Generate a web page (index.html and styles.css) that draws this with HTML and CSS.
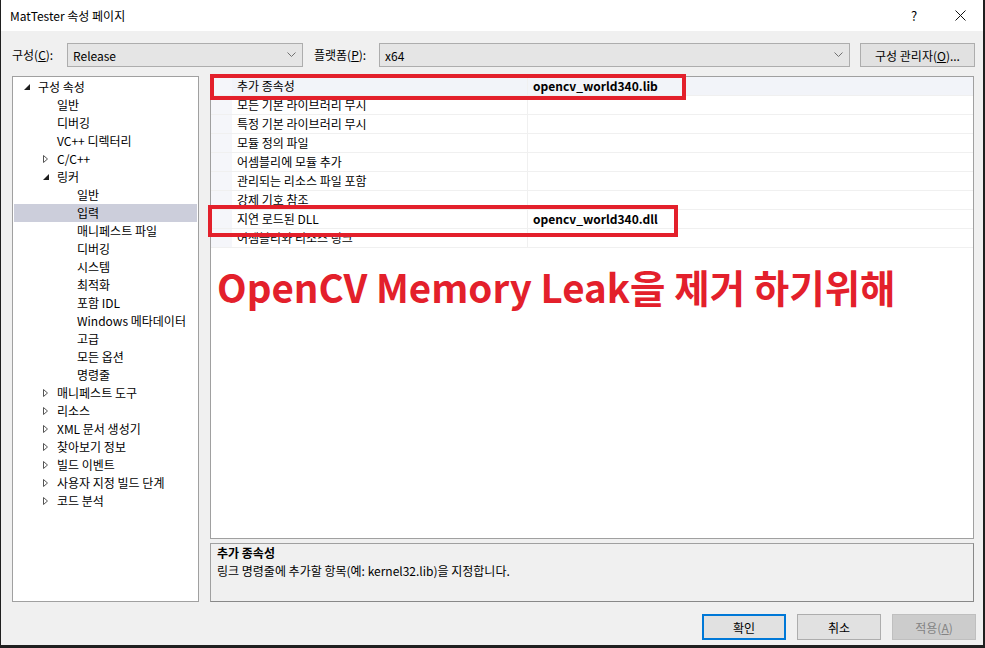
FILE: index.html
```html
<!DOCTYPE html>
<html>
<head>
  <title>MatTester 속성 페이지</title>
  <link rel="stylesheet" href="styles.css">
</head>
<body>
  <div class="window">

    <div class="titlebar">
      <span class="title">MatTester 속성 페이지</span>
      <span class="tb-btn">?</span>
      <span class="tb-btn">
        <svg width="11" height="11" viewBox="0 0 11 11"><path d="M0.5 0.5 L10.5 10.5 M10.5 0.5 L0.5 10.5" stroke="#111" stroke-width="1" fill="none"/></svg>
      </span>
    </div>

    <div class="toolbar">
      <span class="tool-label label-config">구성(<u>C</u>):</span>
      <div class="combo combo-config">
        <span>Release</span>
        <svg class="chev" width="9" height="6" viewBox="0 0 9 6"><path d="M0.5 0.5 L4.5 4.5 L8.5 0.5" stroke="#707070" fill="none"/></svg>
      </div>
      <span class="tool-label label-platform">플랫폼(<u>P</u>):</span>
      <div class="combo combo-platform">
        <span>x64</span>
        <svg class="chev" width="9" height="6" viewBox="0 0 9 6"><path d="M0.5 0.5 L4.5 4.5 L8.5 0.5" stroke="#707070" fill="none"/></svg>
      </div>
      <button class="btn btn-manager" type="button">구성 관리자(<u>O</u>)...</button>
    </div>

    <div class="main">
      <div class="tree">
        <div class="tree-item lvl0"><span class="arrow"><svg width="6" height="6" viewBox="0 0 6 6"><path d="M6 0 L6 6 L0 6 Z" fill="#1e1e1e"/></svg></span>구성 속성</div>
        <div class="tree-item lvl1"><span class="arrow"></span>일반</div>
        <div class="tree-item lvl1"><span class="arrow"></span>디버깅</div>
        <div class="tree-item lvl1"><span class="arrow"></span>VC++ 디렉터리</div>
        <div class="tree-item lvl1"><span class="arrow"><svg width="5" height="8" viewBox="0 0 5 8"><path d="M0.5 0.5 L4.5 4 L0.5 7.5 Z" stroke="#555" fill="none" stroke-width="1"/></svg></span>C/C++</div>
        <div class="tree-item lvl1"><span class="arrow"><svg width="6" height="6" viewBox="0 0 6 6"><path d="M6 0 L6 6 L0 6 Z" fill="#1e1e1e"/></svg></span>링커</div>
        <div class="tree-item lvl2"><span class="arrow"></span>일반</div>
        <div class="tree-item lvl2 selected"><span class="arrow"></span>입력</div>
        <div class="tree-item lvl2"><span class="arrow"></span>매니페스트 파일</div>
        <div class="tree-item lvl2"><span class="arrow"></span>디버깅</div>
        <div class="tree-item lvl2"><span class="arrow"></span>시스템</div>
        <div class="tree-item lvl2"><span class="arrow"></span>최적화</div>
        <div class="tree-item lvl2"><span class="arrow"></span>포함 IDL</div>
        <div class="tree-item lvl2"><span class="arrow"></span>Windows 메타데이터</div>
        <div class="tree-item lvl2"><span class="arrow"></span>고급</div>
        <div class="tree-item lvl2"><span class="arrow"></span>모든 옵션</div>
        <div class="tree-item lvl2"><span class="arrow"></span>명령줄</div>
        <div class="tree-item lvl1"><span class="arrow"><svg width="5" height="8" viewBox="0 0 5 8"><path d="M0.5 0.5 L4.5 4 L0.5 7.5 Z" stroke="#555" fill="none"/></svg></span>매니페스트 도구</div>
        <div class="tree-item lvl1"><span class="arrow"><svg width="5" height="8" viewBox="0 0 5 8"><path d="M0.5 0.5 L4.5 4 L0.5 7.5 Z" stroke="#555" fill="none"/></svg></span>리소스</div>
        <div class="tree-item lvl1"><span class="arrow"><svg width="5" height="8" viewBox="0 0 5 8"><path d="M0.5 0.5 L4.5 4 L0.5 7.5 Z" stroke="#555" fill="none"/></svg></span>XML 문서 생성기</div>
        <div class="tree-item lvl1"><span class="arrow"><svg width="5" height="8" viewBox="0 0 5 8"><path d="M0.5 0.5 L4.5 4 L0.5 7.5 Z" stroke="#555" fill="none"/></svg></span>찾아보기 정보</div>
        <div class="tree-item lvl1"><span class="arrow"><svg width="5" height="8" viewBox="0 0 5 8"><path d="M0.5 0.5 L4.5 4 L0.5 7.5 Z" stroke="#555" fill="none"/></svg></span>빌드 이벤트</div>
        <div class="tree-item lvl1"><span class="arrow"><svg width="5" height="8" viewBox="0 0 5 8"><path d="M0.5 0.5 L4.5 4 L0.5 7.5 Z" stroke="#555" fill="none"/></svg></span>사용자 지정 빌드 단계</div>
        <div class="tree-item lvl1"><span class="arrow"><svg width="5" height="8" viewBox="0 0 5 8"><path d="M0.5 0.5 L4.5 4 L0.5 7.5 Z" stroke="#555" fill="none"/></svg></span>코드 분석</div>
      </div>

      <div class="right-pane">
        <div class="grid">
          <div class="prop-row current"><span class="gutter"></span><span class="prop-name">추가 종속성</span><span class="prop-value">opencv_world340.lib</span></div>
          <div class="prop-row"><span class="gutter"></span><span class="prop-name">모든 기본 라이브러리 무시</span><span class="prop-value"></span></div>
          <div class="prop-row"><span class="gutter"></span><span class="prop-name">특정 기본 라이브러리 무시</span><span class="prop-value"></span></div>
          <div class="prop-row"><span class="gutter"></span><span class="prop-name">모듈 정의 파일</span><span class="prop-value"></span></div>
          <div class="prop-row"><span class="gutter"></span><span class="prop-name">어셈블리에 모듈 추가</span><span class="prop-value"></span></div>
          <div class="prop-row"><span class="gutter"></span><span class="prop-name">관리되는 리소스 파일 포함</span><span class="prop-value"></span></div>
          <div class="prop-row"><span class="gutter"></span><span class="prop-name">강제 기호 참조</span><span class="prop-value"></span></div>
          <div class="prop-row"><span class="gutter"></span><span class="prop-name">지연 로드된 DLL</span><span class="prop-value">opencv_world340.dll</span></div>
          <div class="prop-row"><span class="gutter"></span><span class="prop-name">어셈블리와 리소스 링크</span><span class="prop-value"></span></div>

          <div class="note">OpenCV Memory Leak을 제거 하기위해</div>

          <!-- annotation boxes -->
          <div class="mark mark-lib"></div>
          <div class="mark mark-dll"></div>
        </div>

        <div class="desc">
          <div class="desc-title">추가 종속성</div>
          <div class="desc-text">링크 명령줄에 추가할 항목(예: kernel32.lib)을 지정합니다.</div>
        </div>
      </div>
    </div>

    <div class="footer">
      <button class="btn btn-ok" type="button">확인</button>
      <button class="btn" type="button">취소</button>
      <button class="btn" type="button" disabled>적용(<u>A</u>)</button>
    </div>

  </div>
</body>
</html>
```

FILE: styles.css
```css
/* dialog frame */
body {
  margin: 0;
  background: #1f1f1f;
  font-family: "Noto Sans CJK KR", "Noto Sans", sans-serif;
  font-size: 12px;
  color: #000;
}

.window {
  width: 982px;
  height: 645px;
  margin-left: 1px;
  background: #f0f0f0;
  display: flex;
  flex-direction: column;
}

.titlebar {
  height: 31px;
  background: #fff;
  display: flex;
  align-items: center;
  padding-left: 9px;
}

.title {
  flex: 1;
}

.tb-btn {
  width: 46px;
  height: 31px;
  display: flex;
  align-items: center;
  justify-content: center;
  font-size: 13px;
}

/* config row */
.toolbar {
  height: 45px;
  box-sizing: border-box;
  padding: 12px 0 0 11px;
  display: flex;
  align-items: flex-start;
}

.tool-label {
  height: 24px;
  line-height: 24px;
}

.label-config {
  width: 55px;
}

.label-platform {
  width: 65px;
  margin-left: 11px;
}

.combo {
  height: 24px;
  box-sizing: border-box;
  border: 1px solid #adadad;
  background: #e5e5e5;
  display: flex;
  align-items: center;
  justify-content: space-between;
  padding: 0 6px 0 5px;
}

.combo-config {
  width: 236px;
}

.combo-platform {
  width: 471px;
}

.btn {
  font-family: inherit;
  font-size: 12px;
  color: #000;
  background: #e1e1e1;
  border: 1px solid #adadad;
  padding: 0;
  height: 26px;
  box-sizing: border-box;
}

.btn-manager {
  width: 115px;
  height: 24px;
  margin-left: 10px;
}

.btn:disabled {
  background: #cccccc;
  border-color: #bfbfbf;
  color: #838383;
}

.btn-ok {
  border: 2px solid #0078d7;
}

/* tree + grid */
.main {
  display: flex;
  padding-left: 11px;
  height: 526px;
}

.tree {
  width: 187px;
  height: 526px;
  box-sizing: border-box;
  border: 1px solid #a0a0a0;
  background: #fff;
  padding-top: 1px;
}

.tree-item {
  height: 18px;
  line-height: 18px;
  display: flex;
  align-items: center;
  margin: 0 1px;
}

.tree-item .arrow {
  width: 20px;
  height: 18px;
  display: flex;
  align-items: center;
  padding-left: 6px;
  box-sizing: border-box;
}

.lvl0 {
  padding-left: 4px;
}

.lvl1 {
  padding-left: 23px;
}

.lvl2 {
  padding-left: 43px;
}

.tree-item.selected {
  background: #cccedb;
}

.right-pane {
  width: 764px;
  margin-left: 11px;
  display: flex;
  flex-direction: column;
}

.grid {
  position: relative;
  height: 463px;
  box-sizing: border-box;
  border: 1px solid #a0a0a0;
  background: #fff;
}

.prop-row {
  display: flex;
  height: 19px;
  box-sizing: border-box;
  border-bottom: 1px solid #f0f0f0;
}

.prop-row .gutter {
  width: 21px;
  background: #f5f6fa;
}

.prop-name {
  width: 296px;
  box-sizing: border-box;
  padding-left: 5px;
  line-height: 18px;
  border-right: 1px solid #f0f0f0;
}

.prop-value {
  flex: 1;
  padding-left: 5px;
  line-height: 18px;
  font-weight: bold;
}

.prop-row.current .prop-name,
.prop-row.current .prop-value {
  background: #f2f4f9;
}

.note {
  margin-top: 15px;
  padding-left: 6px;
  font-size: 38.5px;
  line-height: 46px;
  font-weight: bold;
  color: #e3202b;
}

/* red annotation boxes over the rows */
.mark {
  position: absolute;
  border: 4px solid #e3202b;
  box-sizing: border-box;
}

.mark-lib {
  left: -1px;
  top: -3px;
  width: 476px;
  height: 26px;
}

.mark-dll {
  left: -3px;
  top: 128px;
  width: 470px;
  height: 32px;
}

.desc {
  margin-top: 4px;
  height: 59px;
  box-sizing: border-box;
  border: 1px solid #a0a0a0;
  border-right-color: #888;
  border-bottom-color: #888;
  padding-left: 6px;
}

.desc-title {
  font-weight: bold;
  line-height: 18px;
}

.desc-text {
  line-height: 18px;
}

.footer {
  display: flex;
  justify-content: flex-end;
  gap: 11px;
  padding: 12px 7px 0 0;
}

.footer .btn {
  width: 84px;
}
```
